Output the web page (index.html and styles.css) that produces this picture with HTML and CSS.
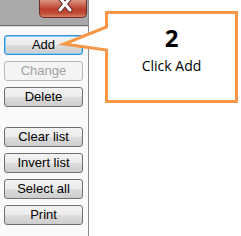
FILE: index.html
```html
<!DOCTYPE html>
<html>
<head>
<meta charset="utf-8">
<link rel="stylesheet" href="styles.css">
</head>
<body>
<div class="stage">
  <div class="window">
    <div class="titlebar">
      <div class="close">
        <svg class="close-x" width="16" height="14" viewBox="0 0 16 14">
          <path d="M3 -2 L13 10 M13 -2 L3 10" stroke="#5a2a22" stroke-width="5" stroke-linecap="round"/>
          <path d="M3 -2 L13 10 M13 -2 L3 10" stroke="#ffffff" stroke-width="3" stroke-linecap="round"/>
        </svg>
      </div>
    </div>
    <div class="panel">
      <div class="group">
        <button class="btn default">Add</button>
        <button class="btn" disabled>Change</button>
        <button class="btn">Delete</button>
      </div>
      <div class="group">
        <button class="btn">Clear list</button>
        <button class="btn">Invert list</button>
        <button class="btn">Select all</button>
        <button class="btn">Print</button>
      </div>
    </div>
  </div>
  <div class="callout">
    <svg class="callout-shape" width="241" height="236" viewBox="0 0 241 236">
      <path d="M106.5 12.5 H236.5 V101.5 H106.5 V50 L64 44 L106.5 27 Z" fill="#ffffff" stroke="#f79646" stroke-width="3" stroke-linejoin="miter"/>
    </svg>
    <div class="callout-text">
      <div class="step">2</div>
      <div class="label">Click Add</div>
    </div>
  </div>
</div>
</body>
</html>
```
FILE: styles.css
```css
html, body {
  margin: 0;
  padding: 0;
  background: #ffffff;
}
.stage {
  position: relative;
  width: 241px;
  height: 236px;
  overflow: hidden;
}
.window {
  width: 88px;
  height: 236px;
  display: flex;
  flex-direction: column;
  border-right: 1px solid #8a8a8a;
  background: #fbf9fb;
}
.titlebar {
  height: 25px;
  flex: none;
  background: #a9a9a9;
  border-bottom: 1px solid #6f6f6f;
  display: flex;
  justify-content: flex-end;
  align-items: flex-start;
  padding-right: 1px;
  box-shadow: 0 1px 0 #d8d8d8;
}
.close {
  width: 48px;
  height: 18px;
  box-sizing: border-box;
  border: 1px solid #6b2d25;
  border-top: none;
  border-radius: 0 0 5px 5px;
  background: linear-gradient(#dc9484 0%, #cc6452 30%, #ba3f2a 55%, #c24f37 80%, #d4846a 100%);
  display: flex;
  justify-content: center;
  align-items: flex-start;
}
.close-x {
  display: block;
  margin-left: 4px;
}
.panel {
  flex: 1;
  display: flex;
  flex-direction: column;
  gap: 20px;
  padding: 9px 0 0 4px;
}
.group {
  display: flex;
  flex-direction: column;
  gap: 6px;
}
.btn {
  appearance: none;
  box-sizing: border-box;
  width: 79px;
  height: 20px;
  margin: 0;
  padding: 0;
  border: 1px solid #707070;
  border-radius: 3px;
  background: linear-gradient(#f3f3f3 0%, #ebebeb 48%, #dcdcdc 52%, #cdcdcd 100%);
  font-family: "Liberation Sans", Arial, sans-serif;
  font-size: 13px;
  line-height: 18px;
  color: #000000;
  text-align: center;
}
.btn.default {
  border-color: #3a8fd0;
  box-shadow: inset 0 0 0 1px #7fd0f6;
}
.btn:disabled {
  border-color: #b5b9bc;
  background: #f4f4f4;
  color: #a3a3a3;
}
.callout {
  position: absolute;
  left: 0;
  top: 0;
  width: 241px;
  height: 236px;
}
.callout-shape {
  position: absolute;
  left: 0;
  top: 0;
}
.callout-text {
  position: absolute;
  left: 108px;
  top: 24px;
  width: 127px;
  display: flex;
  flex-direction: column;
  align-items: center;
  font-family: "Open Sans", "Liberation Sans", sans-serif;
  color: #000000;
}
.step {
  font-size: 24px;
  font-weight: 700;
  line-height: 28px;
}
.label {
  font-size: 14px;
  line-height: 18px;
  margin-top: 5px;
}
```
